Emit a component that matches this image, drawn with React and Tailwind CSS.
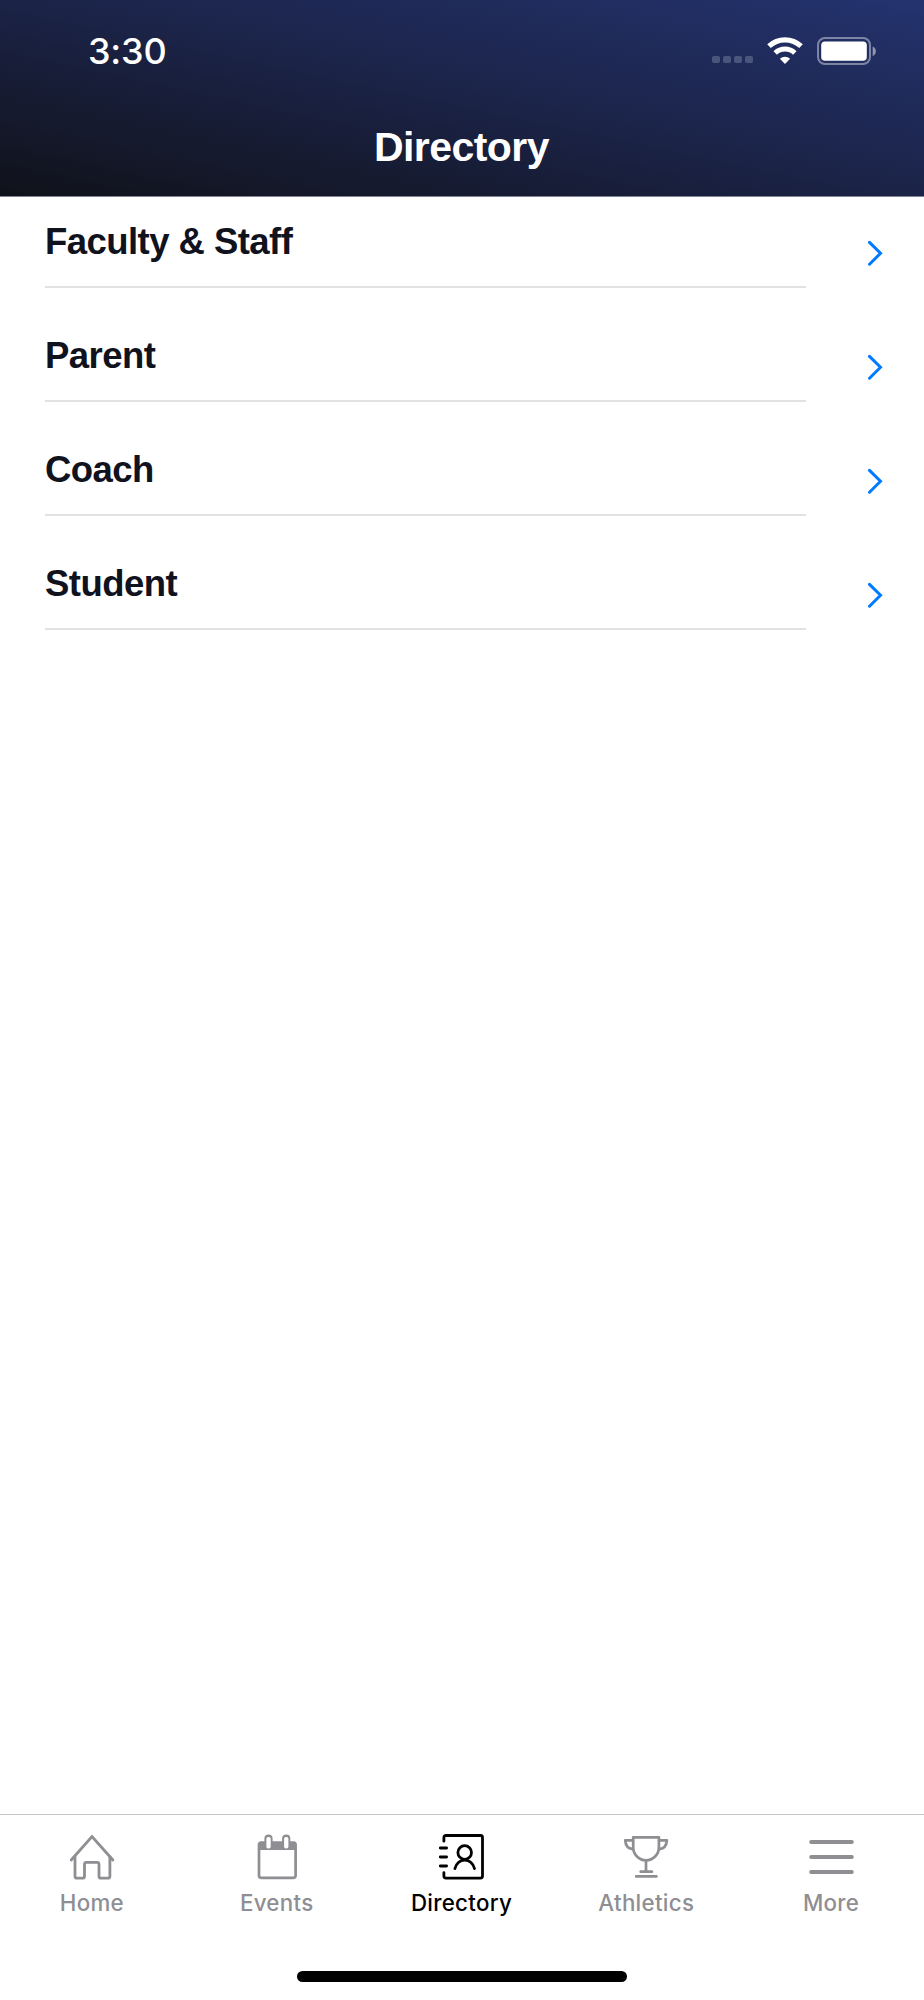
const TABS = [
  {
    label: "Home",
    icon: (
      <g strokeWidth="2.8" strokeLinejoin="round" strokeLinecap="round">
        <path d="M3.2 28 24 4.6 44.9 28" strokeLinejoin="miter" />
        <path d="M7 25V44.2a2 2 0 0 0 2 2h5.5a2 2 0 0 0 2-2V32.3a2 2 0 0 1 2-2H29a2 2 0 0 1 2 2V44.2a2 2 0 0 0 2 2h6.9a2 2 0 0 0 2-2V25" />
      </g>
    ),
  },
  {
    label: "Events",
    icon: (
      <g strokeWidth="2.7">
        <rect x="6" y="10.5" width="36.6" height="35.3" rx="2.2" />
        <path d="M6 10.5h36.6V18H6z" fill="currentColor" stroke="none" />
        <path d="M11.4 6.6a4.1 4.1 0 0 1 8.2 0v4h-8.2zM29.1 6.6a4.1 4.1 0 0 1 8.2 0v4h-8.2z" fill="currentColor" stroke="none" />
        <rect x="13.4" y="4.9" width="4.3" height="11.6" rx="1.8" fill="white" stroke="none" />
        <rect x="31.1" y="4.9" width="4.3" height="11.6" rx="1.8" fill="white" stroke="none" />
      </g>
    ),
  },
  {
    label: "Directory",
    active: true,
    icon: (
      <g strokeWidth="2.8" strokeLinecap="round">
        <path d="M5.9 9.2V5.5a2 2 0 0 1 2-2h34.6a2 2 0 0 1 2 2v38.6a2 2 0 0 1-2 2H7.9a2 2 0 0 1-2-2v-3.5" />
        <path d="M2.3 16h6.3M2.3 25h6.3M2.3 34h6.3" />
        <circle cx="26.7" cy="20.5" r="6.8" />
        <path d="M16.9 36.6a10.3 12.4 0 0 1 19.6 0" />
      </g>
    ),
  },
  {
    label: "Athletics",
    icon: (
      <g strokeWidth="2.7" strokeLinecap="round" strokeLinejoin="round">
        <path d="M10.2 5.3h25.7v10.2c0 7-5.8 12.8-12.85 12.8S10.2 22.5 10.2 15.5z" />
        <path d="M10 8.4H2.2C2.6 13.4 5.4 16.7 9.5 17.2M36.1 8.4H43.9C43.5 13.4 40.7 16.7 36.6 17.2" />
        <path d="M23 28.5V39.7M17.7 39.7h11.2M13.2 44.4h20.2" />
      </g>
    ),
  },
  {
    label: "More",
    icon: <path d="M3.2 10h40.6M3.2 25h40.6M3.2 40h40.6" strokeWidth="4" strokeLinecap="round" />,
  },
];

const GROUPS = ["Faculty & Staff", "Parent", "Coach", "Student"];

function StatusBar() {
  return (
    <div className="flex h-[101px] items-center pl-[88px] pr-[47px]">
      <span className="font-['Inter'] text-[36px] font-medium leading-none tracking-[-0.2px]">3:30</span>
      <div className="ml-auto flex items-center">
        <div className="mr-[14px] mt-[18px] flex gap-[3.4px]">
          {[0, 1, 2, 3].map((dot) => (
            <span key={dot} className="size-[7.7px] rounded-[2px] bg-white/20" />
          ))}
        </div>
        <svg className="mr-[14px] h-[28px] w-[36px]" viewBox="0 0 36 28" fill="none" stroke="white">
          <path d="M2 9.2a23.2 23.2 0 0 1 32 0" strokeWidth="5.2" />
          <path d="M8.2 16a14.2 14.2 0 0 1 19.6 0" strokeWidth="5" />
          <path d="M18 27 12.9 21.7a7.4 7.4 0 0 1 10.2 0z" fill="white" stroke="none" />
        </svg>
        <svg className="h-[28px] w-[60px]" viewBox="0 0 60 28" fill="none">
          <rect x="1" y="1" width="52" height="26" rx="7" stroke="white" strokeOpacity="0.42" strokeWidth="2" />
          <rect x="4.2" y="4.5" width="45.6" height="19.2" rx="3.8" fill="white" />
          <path d="M55.7 9.5c4.2 1.8 4.2 7.7 0 9.5z" fill="white" fillOpacity="0.5" />
        </svg>
      </div>
    </div>
  );
}

export default function App() {
  return (
    <div className="flex h-[2000px] w-[924px] flex-col overflow-hidden bg-white font-['Liberation_Sans',sans-serif]">
      <header className="h-[197px] border-b border-[#7f8397] bg-linear-to-tr from-[#10121a] via-[#1b2347] to-[#24336f] text-white">
        <StatusBar />
        <h1 className="flex h-[93px] items-center justify-center pr-[1px] text-[41px] font-bold leading-none tracking-[-0.55px]">
          Directory
        </h1>
      </header>

      <main className="-mt-[23px] flex-1">
        {GROUPS.map((name) => (
          <div key={name} className="flex h-[114px] pl-[45px]">
            <div className="flex w-[761px] items-end border-b-2 border-[#e2e2e2] pb-[23px]">
              <span className="text-[36.5px] font-bold leading-[42px] tracking-[-0.55px] text-[#10121d]">{name}</span>
            </div>
            <svg className="ml-[61px] mt-[66px] h-[26px] w-[17px]" viewBox="0 0 17 26" fill="none">
              <path d="M2.5 2.4 13.5 13.3 2.5 24.2" stroke="#007aff" strokeWidth="3" strokeLinecap="round" />
            </svg>
          </div>
        ))}
      </main>

      <nav className="flex h-[186px] flex-col items-center border-t border-[#c4c4c6]">
        <div className="flex w-full">
          {TABS.map(({ label, icon, active }) => (
            <div
              key={label}
              className={`flex flex-1 flex-col items-center pt-[17px] ${active ? "text-black" : "text-[#8e8e93]"}`}
            >
              <svg className="size-[48px]" viewBox="0 0 48 48" fill="none" stroke="currentColor">
                {icon}
              </svg>
              <span className="mt-[8px] pr-[1px] font-['Inter'] text-[22.3px] font-medium leading-[30px] tracking-[0.3px]">
                {label}
              </span>
            </div>
          ))}
        </div>
        <div className="mt-auto mb-[18px] h-[11px] w-[330px] rounded-full bg-black" />
      </nav>
    </div>
  );
}
